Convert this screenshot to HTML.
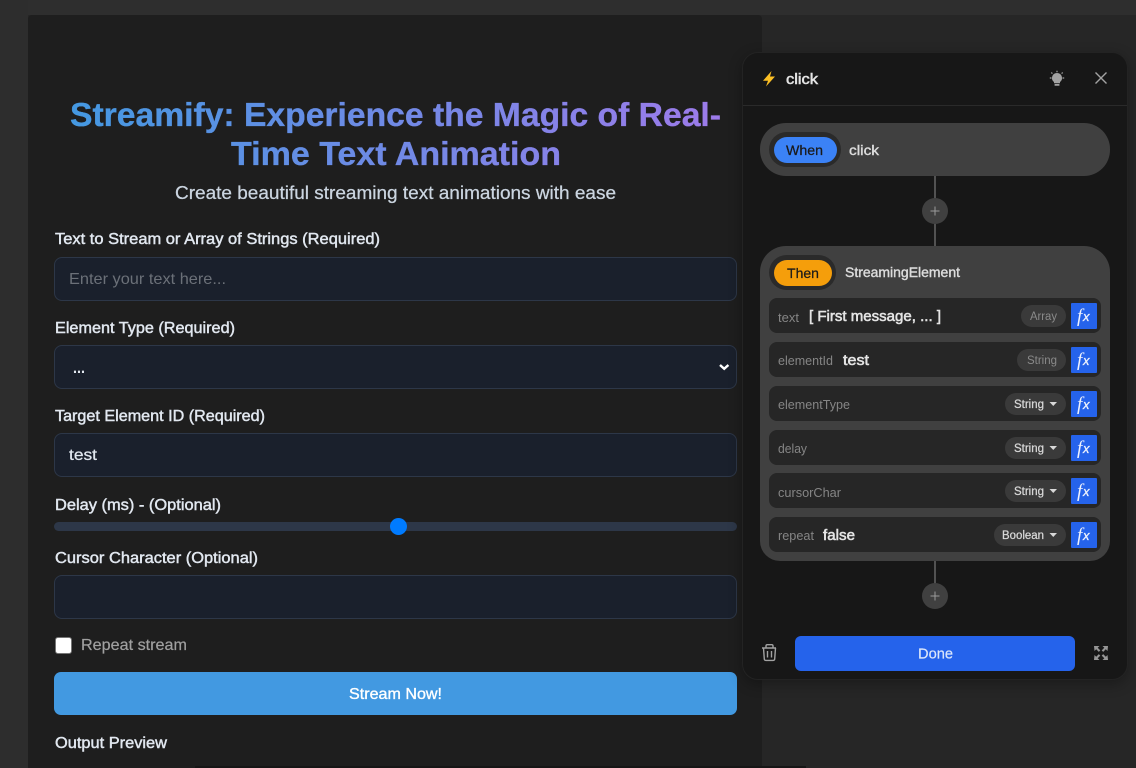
<!DOCTYPE html>
<html><head><meta charset="utf-8"><title>Streamify</title>
<style>
html,body{margin:0;padding:0;width:1136px;height:768px;overflow:hidden;background:#262626}
body{position:relative;font-family:"Liberation Sans",sans-serif}
div{position:absolute;box-sizing:border-box}
.in{left:54px;width:683px;height:44px;background:#1a202c;border:1px solid #2d3748;border-radius:8px}
.row{left:769px;width:332px;height:35px;background:#262626;border-radius:8px}
.fx{left:1071px;width:26px;height:26px;background:#2563eb;border-radius:1px}
.pill{height:22px;background:#3a3a3a;border-radius:11px}
svg{position:absolute;left:0;top:0;filter:blur(.3px)}
text{font-family:"Liberation Sans",sans-serif}
.l{font-size:16px;fill:#e2e8f0;stroke:#e2e8f0;stroke-width:.45px}
.k{font-size:13px;fill:#858585}
.v{font-size:15px;fill:#e5e5e5;stroke:#e5e5e5;stroke-width:.55px}
.t{font-size:11.5px;fill:#d8d8d8;stroke:#d8d8d8;stroke-width:.25px}
.m{font-size:11.5px;fill:#8a8a8a}
.h{font-size:14px;fill:#dcdcdc;stroke:#dcdcdc;stroke-width:.4px}
.d{font-size:14px;fill:#1a1a1a;stroke:#1a1a1a;stroke-width:.25px}
.f{font-family:"Liberation Serif",serif;font-style:italic;font-size:19px;fill:#eef2fd}
.x{font-family:"Liberation Sans",sans-serif;font-style:italic;font-size:13px;fill:#eef2fd;stroke:#eef2fd;stroke-width:.3px}
</style></head><body>
<div style="left:0;top:0;width:1136px;height:15px;background:#2e2e2e"></div>
<div style="left:0;top:0;width:28px;height:768px;background:#2d2d2d"></div>
<div style="left:28px;top:15px;width:734px;height:753px;background:#1e1e1e;border-radius:4px 4px 0 0"></div>
<div style="left:195px;top:766px;width:611px;height:2px;background:#161616"></div>
<div class="in" style="top:257px"></div>
<div class="in" style="top:345px"></div>
<div class="in" style="top:433px"></div>
<div style="left:54px;top:522px;width:683px;height:9px;background:#2d3748;border-radius:5px"></div>
<div style="left:390px;top:518px;width:17px;height:17px;background:#007bff;border-radius:50%"></div>
<div class="in" style="top:575px"></div>
<div style="left:55px;top:637px;width:17px;height:17px;background:#fff;border:1px solid #767676;border-radius:3px"></div>
<div style="left:54px;top:672px;width:683px;height:43px;background:#4299e1;border-radius:7px"></div>

<div style="left:742px;top:52px;width:386px;height:628px;background:#171717;border:1px solid #232323;border-radius:16px;box-shadow:0 4px 14px rgba(0,0,0,.3)"></div>
<div style="left:743px;top:105px;width:384px;height:1px;background:#2a2a2a"></div>
<div style="left:934px;top:176px;width:2px;height:70px;background:#525252"></div>
<div style="left:934px;top:561px;width:2px;height:24px;background:#525252"></div>
<div style="left:922px;top:198px;width:26px;height:26px;background:#404040;border-radius:50%"></div>
<div style="left:922px;top:583px;width:26px;height:26px;background:#404040;border-radius:50%"></div>
<div style="left:760px;top:123px;width:350px;height:53px;background:#404040;border-radius:26px"></div>
<div style="left:769px;top:132px;width:72px;height:35px;background:#2a2a2a;border-radius:18px"></div>
<div style="left:773.5px;top:137px;width:63px;height:26px;background:#3b82f6;border-radius:13px"></div>
<div style="left:760px;top:246px;width:350px;height:315px;background:#404040;border-radius:26px 26px 20px 20px"></div>
<div style="left:769px;top:255px;width:67px;height:35px;background:#2a2a2a;border-radius:18px"></div>
<div style="left:773.5px;top:260px;width:58px;height:26px;background:#f59e0b;border-radius:13px"></div>

<div class="row" style="top:298px"></div>
<div class="row" style="top:342px"></div>
<div class="row" style="top:386px"></div>
<div class="row" style="top:430px"></div>
<div class="row" style="top:473px"></div>
<div class="row" style="top:517px"></div>
<div class="pill" style="left:1021px;top:305px;width:45px"></div>
<div class="pill" style="left:1017px;top:349px;width:49px"></div>
<div class="pill" style="left:1005px;top:393px;width:61px"></div>
<div class="pill" style="left:1005px;top:437px;width:61px"></div>
<div class="pill" style="left:1005px;top:480px;width:61px"></div>
<div class="pill" style="left:994px;top:524px;width:72px"></div>
<div class="fx" style="top:303px"></div>
<div class="fx" style="top:347px"></div>
<div class="fx" style="top:391px"></div>
<div class="fx" style="top:435px"></div>
<div class="fx" style="top:478px"></div>
<div class="fx" style="top:522px"></div>
<div style="left:795px;top:636px;width:280px;height:35px;background:#2563eb;border-radius:6px"></div>

<svg width="1136" height="768" viewBox="0 0 1136 768">
<defs><linearGradient id="g" gradientUnits="userSpaceOnUse" x1="54" y1="0" x2="737" y2="0"><stop offset="0" stop-color="#4299e1"/><stop offset="1" stop-color="#9f7aea"/></linearGradient></defs>
<g font-size="33" font-weight="700" fill="url(#g)" stroke="url(#g)" stroke-width=".35">
<text x="70" y="126" textLength="651" lengthAdjust="spacingAndGlyphs">Streamify: Experience the Magic of Real-</text>
<text x="231" y="165" textLength="330" lengthAdjust="spacingAndGlyphs">Time Text Animation</text>
</g>
<text x="175" y="199" font-size="18" fill="#cbd5e0" stroke="#cbd5e0" stroke-width=".25" textLength="441" lengthAdjust="spacingAndGlyphs">Create beautiful streaming text animations with ease</text>
<text class="l" x="55" y="244" textLength="325" lengthAdjust="spacingAndGlyphs">Text to Stream or Array of Strings (Required)</text>
<text x="69" y="284" font-size="16" fill="#6b7078" textLength="157" lengthAdjust="spacingAndGlyphs">Enter your text here...</text>
<text class="l" x="55" y="333" textLength="180" lengthAdjust="spacingAndGlyphs">Element Type (Required)</text>
<text x="73" y="373" font-size="16" font-weight="700" fill="#e2e8f0" textLength="12" lengthAdjust="spacingAndGlyphs">...</text>
<path d="M720 365l4.200 3.800 4.200-3.800" fill="none" stroke="#fff" stroke-width="2.400"/>
<text class="l" x="55" y="421" textLength="210" lengthAdjust="spacingAndGlyphs">Target Element ID (Required)</text>
<text x="69" y="460" font-size="16" fill="#e2e8f0" stroke="#e2e8f0" stroke-width=".25" textLength="28" lengthAdjust="spacingAndGlyphs">test</text>
<text class="l" x="55" y="510" textLength="166" lengthAdjust="spacingAndGlyphs">Delay (ms) - (Optional)</text>
<text class="l" x="55" y="563" textLength="203" lengthAdjust="spacingAndGlyphs">Cursor Character (Optional)</text>
<text x="81" y="650" font-size="16" fill="#a0a0a0" stroke="#a0a0a0" stroke-width=".2" textLength="106" lengthAdjust="spacingAndGlyphs">Repeat stream</text>
<text x="349" y="699" font-size="16" fill="#fff" stroke="#fff" stroke-width=".35" textLength="93" lengthAdjust="spacingAndGlyphs">Stream Now!</text>
<text class="l" x="55" y="748" textLength="112" lengthAdjust="spacingAndGlyphs">Output Preview</text>

<path d="M771.500 71L763 80.800h5L766 86.500l9-10h-5z" fill="#fbbf24"/>
<text x="786" y="84" font-size="15" fill="#e5e5e5" stroke="#e5e5e5" stroke-width=".55" textLength="32" lengthAdjust="spacingAndGlyphs">click</text>
<g fill="#a3a3a3">
<path d="M1057 73a5 5 0 0 1 3 9v1.300h-6V82a5 5 0 0 1 3-9z"/>
<rect x="1054.500" y="84" width="5" height="1.800" rx=".7"/>
</g>
<path d="M1057 70.800v1.500M1051.300 72.500l1.100 1.100M1062.700 72.500l-1.100 1.100M1049.800 78h1.700M1062.500 78h1.700" stroke="#a3a3a3" stroke-width="1.200" fill="none"/>
<path d="M1095.500 72.500l11 11M1106.500 72.500l-11 11" stroke="#a3a3a3" stroke-width="1.400" fill="none"/>

<text class="d" x="786" y="155" textLength="37" lengthAdjust="spacingAndGlyphs">When</text>
<text class="h" x="849" y="155" textLength="30" lengthAdjust="spacingAndGlyphs">click</text>
<path d="M930.500 211h9M935 206.500v9M930.500 596h9M935 591.500v9" stroke="#9a9a9a" stroke-width="1" fill="none"/>
<text class="d" x="787" y="278" textLength="32" lengthAdjust="spacingAndGlyphs">Then</text>
<text class="h" x="845" y="277" textLength="115" lengthAdjust="spacingAndGlyphs">StreamingElement</text>

<text class="k" x="778" y="322" textLength="21" lengthAdjust="spacingAndGlyphs">text</text>
<text class="v" x="809" y="321" textLength="132" lengthAdjust="spacingAndGlyphs">[ First message, ... ]</text>
<text class="m" x="1030" y="320" textLength="27" lengthAdjust="spacingAndGlyphs">Array</text>
<text class="k" x="778" y="365" textLength="55" lengthAdjust="spacingAndGlyphs">elementId</text>
<text class="v" x="843" y="365" textLength="26" lengthAdjust="spacingAndGlyphs">test</text>
<text class="m" x="1027" y="364" textLength="30" lengthAdjust="spacingAndGlyphs">String</text>
<text class="k" x="778" y="409" textLength="72" lengthAdjust="spacingAndGlyphs">elementType</text>
<text class="t" x="1014" y="408" textLength="30" lengthAdjust="spacingAndGlyphs">String</text>
<text class="k" x="778" y="453" textLength="29" lengthAdjust="spacingAndGlyphs">delay</text>
<text class="t" x="1014" y="452" textLength="30" lengthAdjust="spacingAndGlyphs">String</text>
<text class="k" x="778" y="497" textLength="63" lengthAdjust="spacingAndGlyphs">cursorChar</text>
<text class="t" x="1014" y="495" textLength="30" lengthAdjust="spacingAndGlyphs">String</text>
<text class="k" x="778" y="540" textLength="36" lengthAdjust="spacingAndGlyphs">repeat</text>
<text class="v" x="823" y="540" textLength="32" lengthAdjust="spacingAndGlyphs">false</text>
<text class="t" x="1002" y="539" textLength="42" lengthAdjust="spacingAndGlyphs">Boolean</text>
<g fill="#d8d8d8">
<path d="M1049.500 402h7.500l-3.750 4z"/><path d="M1049.500 446h7.500l-3.750 4z"/><path d="M1049.500 489h7.500l-3.750 4z"/><path d="M1049.500 533h7.500l-3.750 4z"/>
</g>
<text class="f" x="1077" y="322">f</text><text class="x" x="1083" y="321">x</text>
<text class="f" x="1077" y="366">f</text><text class="x" x="1083" y="365">x</text>
<text class="f" x="1077" y="410">f</text><text class="x" x="1083" y="409">x</text>
<text class="f" x="1077" y="454">f</text><text class="x" x="1083" y="453">x</text>
<text class="f" x="1077" y="497">f</text><text class="x" x="1083" y="496">x</text>
<text class="f" x="1077" y="541">f</text><text class="x" x="1083" y="540">x</text>

<path d="M762 648h14M763.500 648l.8 11a1.500 1.500 0 0 0 1.500 1.400h7.400a1.500 1.500 0 0 0 1.500-1.400l.8-11M766 648v-2a1.300 1.300 0 0 1 1.300-1.300h4.400a1.300 1.300 0 0 1 1.300 1.300v2M767.500 651v6.500M771.500 651v6.500" fill="none" stroke="#a3a3a3" stroke-width="1.400"/>
<text x="918" y="658.500" font-size="15" fill="#dbe6fa" stroke="#dbe6fa" stroke-width=".2" textLength="35" lengthAdjust="spacingAndGlyphs">Done</text>
<g fill="#969696">
<path d="M1094 646h5.500l-1.800 1.800 2.600 2.600-1.500 1.500-2.600-2.600-1.700 1.700z"/>
<path d="M1108 646h-5.500l1.800 1.800-2.600 2.600 1.500 1.500 2.600-2.600 1.700 1.700z"/>
<path d="M1094 660h5.500l-1.800-1.800 2.600-2.600-1.500-1.500-2.600 2.600-1.700-1.700z"/>
<path d="M1108 660h-5.500l1.800-1.800-2.600-2.600 1.500-1.500 2.600 2.600 1.700-1.700z"/>
</g>
</svg>
</body></html>
